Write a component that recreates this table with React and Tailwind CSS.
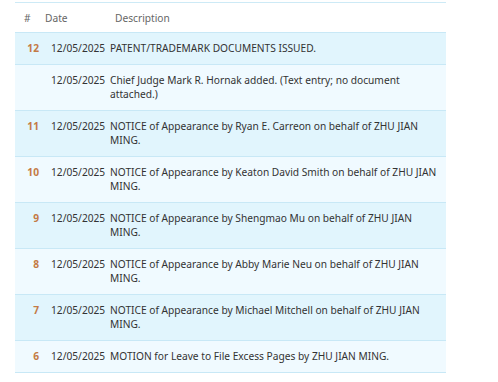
import React from "react";

const rows = [
  { n: "12", d: "PATENT/TRADEMARK DOCUMENTS ISSUED.", dark: true },
  { n: "", d: "Chief Judge Mark R. Hornak added. (Text entry; no document attached.)", dark: false },
  { n: "11", d: "NOTICE of Appearance by Ryan E. Carreon on behalf of ZHU JIAN MING.", dark: true },
  { n: "10", d: "NOTICE of Appearance by Keaton David Smith on behalf of ZHU JIAN MING.", dark: false },
  { n: "9", d: "NOTICE of Appearance by Shengmao Mu on behalf of ZHU JIAN MING.", dark: true },
  { n: "8", d: "NOTICE of Appearance by Abby Marie Neu on behalf of ZHU JIAN MING.", dark: false },
  { n: "7", d: "NOTICE of Appearance by Michael Mitchell on behalf of ZHU JIAN MING.", dark: true },
  { n: "6", d: "MOTION for Leave to File Excess Pages by ZHU JIAN MING.", dark: false },
];

export default function App() {
  return (
    <div className="w-[498px] h-[382px] bg-white overflow-hidden pt-[2px]" style={{ fontFamily: '"Noto Sans", sans-serif' }}>
      <div className="ml-[15px] w-[431px] border-t border-[#cdeaf6] text-[10.2px] leading-[14px]">
        <div className="flex h-[30px] items-center text-[#666] border-b border-[#c8e8f6] bg-white">
          <div className="w-[30px] pl-[9px]">#</div>
          <div className="w-[70px]">Date</div>
          <div>Description</div>
        </div>
        {rows.map((r, i) => (
          <div
            key={i}
            className={`flex pt-2 pb-[9px] border-b border-[#c8e8f6] text-[#333] ${r.dark ? "bg-[#e1f5fd]" : "bg-[#f0faff]"}`}
          >
            <div className="w-[24px] shrink-0 text-right font-bold text-[#c47a45]">{r.n}</div>
            <div className="w-[71px] pl-[12px] shrink-0">12/05/2025</div>
            <div className="flex-1 pr-[7px]">{r.d}</div>
          </div>
        ))}
      </div>
    </div>
  );
}
